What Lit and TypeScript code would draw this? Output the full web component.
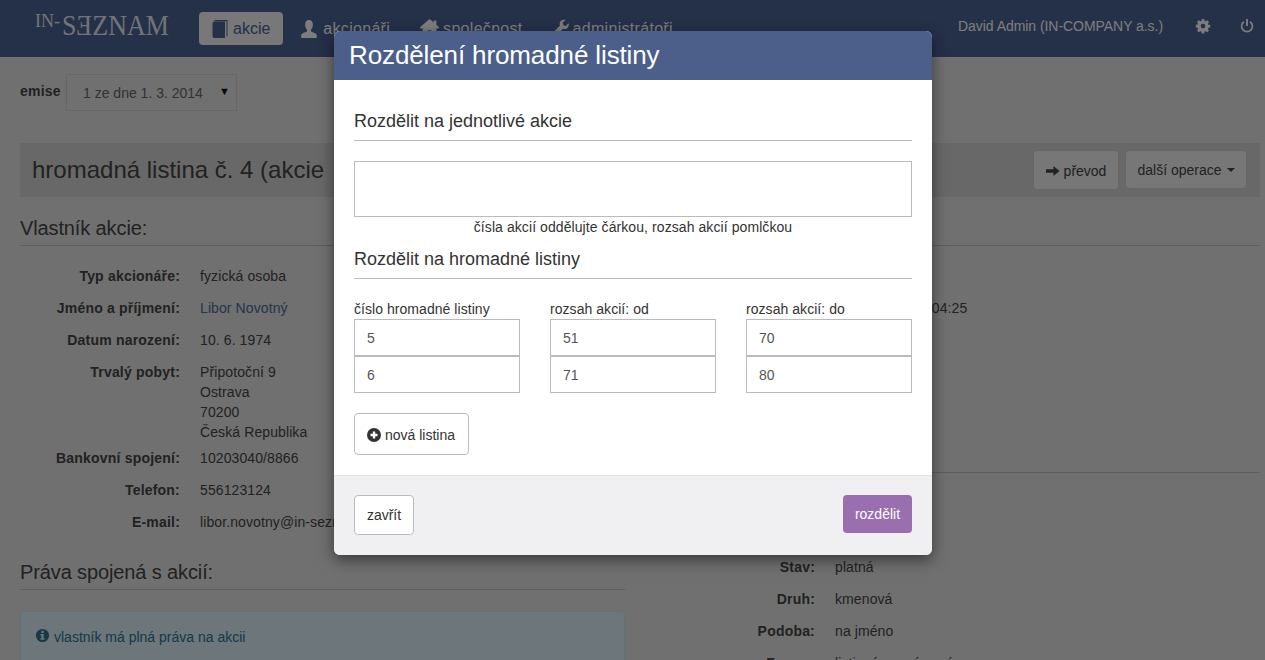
import { LitElement, html, css, svg } from "lit";
import { customElement } from "lit/decorators.js";

const icons = {
  book: svg`<path d="M.5 3C.5 1.900 1.500 1.300 2.500 1.300H13V16H2.500C1.200 16 .5 15.100 .5 14z"/><path d="M2.500 0H15.500V14.500H14.500V1H2.500z"/>`,
  user: svg`<path d="M8 0c2.500 0 3.900 1.800 3.900 4.200 0 1.800-.8 3.500-1.900 4.500v1.500c1.800.7 5.800 1.600 5.800 3.200V16H.2v-2.600c0-1.600 4-2.500 5.800-3.200V8.700C4.900 7.700 4.100 6 4.100 4.200 4.100 1.800 5.500 0 8 0z"/>`,
  home: svg`<path d="M8 0 11.600 3.300V1.500h2.200v3.900L16.300 8l-.9.900H13.800V15.500H9.600v-5H6.400v5H2.200V8.900H.6L-.3 8z"/>`,
  wrench: svg`<path d="M15.600 3.200 12.800 6l-2.500-.7-.7-2.500L12.400 0C10.400-.5 8.300.1 7.300 1.700c-.7 1.200-.8 2.700-.3 3.900L.7 12c-.9.9-.9 2.200 0 3 .8.9 2.100.9 3 0l6.300-6.200c1.300.5 2.700.4 3.900-.3 1.600-1 2.200-3.200 1.700-5.300z"/>`,
  gear: svg`<path fill-rule="evenodd" d="M6.600 0h2.800l.4 2.200 1.200.5L12.900 1.400l2 2-1.300 1.900.5 1.200 2.200.4v2.800l-2.200.4-.5 1.200 1.300 1.900-2 2-1.900-1.300-1.200.5-.4 2.200H6.600l-.4-2.200-1.200-.5-1.900 1.300-2-2 1.300-1.900-.5-1.200L-.3 9.500V6.700l2.200-.4.5-1.200L1.100 3.400l2-2L5 2.700l1.200-.5zM8 5.400A2.700 2.700 0 1 0 8 10.800 2.700 2.700 0 0 0 8 5.400z"/>`,
  power: svg`<path d="M4.500 3.200a6.200 6.200 0 1 0 7 0" fill="none" stroke="currentColor" stroke-width="2"/><rect x="6.900" y="0" width="2.200" height="8"/>`,
  arrow: svg`<path d="M0 6h8.500V2.200L15.500 8l-7 5.800V10H0z"/>`,
  plus: svg`<path fill-rule="evenodd" d="M8 1a7 7 0 1 1 0 14A7 7 0 0 1 8 1zM6.800 4.500v2.300H4.500v2.400h2.300v2.300h2.400V9.200h2.300V6.800H9.200V4.500z"/>`,
  info: svg`<path fill-rule="evenodd" d="M8 1a7 7 0 1 1 0 14A7 7 0 0 1 8 1zM6.800 3v2.300h2.400V3zM5.800 6.500v1.400h1v3.100h-1V12.500h4.400V11h-1V6.500z"/>`,
};

const icon = (name: keyof typeof icons, cls = "") =>
  html`<svg class="ico ${cls}" viewBox="0 0 16 16" preserveAspectRatio="none" aria-hidden="true">${icons[name]}</svg>`;

@customElement("app-root")
export class AppRoot extends LitElement {
  static styles = css`
    :host {
      display: block;
      position: relative;
      height: 660px;
      overflow: hidden;
      background: #e0e0e0;
      font-family: "Liberation Sans", Arial, sans-serif;
      font-size: 14px;
      line-height: 20px;
      color: #444;
    }
    .ico { width: 1em; height: 1em; fill: currentColor; flex: none; display: block; overflow: visible; }

    .navbar {
      height: 57px;
      background: #4a6092;
      border-bottom: 1px solid #e4e4e4;
      display: flex;
      align-items: center;
      color: #fafafa;
    }
    .logo {
      margin-left: 35px;
      width: 164px;
      flex: none;
      display: flex;
      align-items: flex-start;
      font-family: "Liberation Serif", serif;
      color: #fff;
      opacity: 0.85;
      height: 34px;
    }
    .logo .in { font-size: 18px; line-height: 15px; margin-top: 2px; margin-right: 2px; }
    .logo .name {
      font-size: 26px;
      line-height: 30px;
      display: inline-block;
      transform: scaleY(1.17);
      transform-origin: 0 50%;
      margin-top: -1px;
      white-space: nowrap;
    }
    .logo .mir { display: inline-block; transform: scaleX(-1); }
    .nav { display: flex; align-items: center; font-size: 16px; }
    .nav a {
      display: flex;
      align-items: center;
      height: 33px;
      padding: 0 12px;
      border-radius: 4px;
      gap: 4px;
      margin-right: 6px;
      letter-spacing: 0.3px;
    }
    .nav a .ico { width: 16px; height: 18px; }
    .nav a.active { background: #f0f0f0; color: #4a6092; padding: 0 13px; gap: 5px; letter-spacing: 0; }
    .nav a.person { gap: 6px; }
    .nav a.home .ico { width: 19px; height: 17px; margin-top: -2px; }
    .nav a.tool .ico { height: 16px; margin-top: -2px; }
    .user {
      margin-left: auto;
      display: flex;
      align-items: center;
      font-size: 14px;
      letter-spacing: -0.05px;
      padding: 0 11px 6px 0;
    }
    .user .ico { width: 14px; height: 14px; }
    .user .gear { margin-left: 33px; }
    .user .power { margin-left: 30px; }

    .content { padding: 16px 5px 0 20px; }
    .emise { display: flex; align-items: center; height: 37px; }
    .emise b { width: 46px; margin-top: -3px; letter-spacing: 0.2px; }
    .select {
      width: 171px;
      height: 37px;
      box-sizing: border-box;
      border: 1px solid #ccc;
      padding: 0 6px 0 16px;
      display: flex;
      align-items: center;
      justify-content: space-between;
      color: #666;
    }
    .select span { margin-top: 1px; }
    .select i { font-style: normal; color: #111; font-size: 11px; margin-top: -4px; }
    .title {
      margin-top: 32px;
      height: 54px;
      background: #d0d0d0;
      display: flex;
      align-items: center;
      padding-left: 12px;
    }
    .title h1 { margin: 0; font-size: 24px; font-weight: 400; color: #444; white-space: nowrap; }
    .btns { margin-left: auto; display: flex; align-items: flex-start; gap: 6px; padding: 7px 13px 0 0; align-self: stretch; }
    .btn-bg {
      border: 1px solid #ccc;
      border-radius: 4px;
      background: #efefef;
      display: flex;
      align-items: center;
      gap: 4px;
      color: #444;
      box-sizing: border-box;
      justify-content: center;
    }
    .btn-bg.a { width: 86px; height: 40px; padding-top: 1px; }
    .btn-bg.b { width: 122px; height: 39px; }
    .btn-bg .car {
      width: 0; height: 0;
      border: 4px solid transparent;
      border-top-color: #444;
      border-bottom: 0;
      margin-left: 1px;
    }
    .cols { display: grid; grid-template-columns: 605px 605px; column-gap: 30px; margin-top: 16px; }
    .head {
      margin: 0;
      font-size: 20px;
      font-weight: 400;
      line-height: 30px;
      letter-spacing: -0.12px;
      padding-bottom: 2px;
      border-bottom: 1px solid #bbb;
      color: #444;
    }
    .dl { margin: 20px 0 0; }
    .row { display: grid; grid-template-columns: 160px 1fr; column-gap: 20px; margin-bottom: 12px; }
    .row.tight { margin-bottom: 6px; }
    .row dt { text-align: right; font-weight: 700; letter-spacing: 0.2px; }
    .row dd { margin: 0; white-space: nowrap; letter-spacing: 0.1px; }
    .row a { color: #4a6c9a; }
    .gap { margin-top: 25px; }
    .alert {
      margin-top: 21px;
      height: 60px;
      box-sizing: border-box;
      background: #d9edf7;
      border: 1px solid #bce8f1;
      border-radius: 4px;
      padding: 15px 15px;
      color: #31708f;
      display: flex;
      gap: 4px;
    }
    .alert .ico { width: 15px; height: 15px; margin: 1px 0 0 -1px; }
    .spacer-time { margin-left: 1.900px; }
    .right-head { margin-top: 122px; }
    .dl.r { margin-top: 84px; }

    .overlay { position: absolute; inset: 0; background: rgba(0, 0, 0, 0.5); }
    .modal {
      position: absolute;
      left: 334px;
      top: 31px;
      width: 598px;
      height: 524px;
      background: #fff;
      border-radius: 6px;
      box-shadow: 0 5px 15px rgba(0, 0, 0, 0.5);
      display: flex;
      flex-direction: column;
      overflow: hidden;
      color: #333;
    }
    .m-head {
      height: 49px;
      flex: none;
      background: #4b5f8a;
      color: #fff;
      padding-left: 15px;
      display: flex;
      align-items: center;
    }
    .m-head h2 { margin: 0; font-size: 26px; font-weight: 400; line-height: 49px; letter-spacing: -0.12px; }
    .m-body { flex: 1; padding: 31px 20px 0; }
    .m-body h3 {
      margin: 0;
      font-size: 18px;
      font-weight: 400;
      line-height: 20px;
      padding-bottom: 9px;
      border-bottom: 1px solid #bbb;
      color: #333;
    }
    .ta { display: block; margin-top: 20px; height: 56px; box-sizing: border-box; border: 1px solid #bbb; }
    .hint { text-align: center; line-height: 20px; letter-spacing: 0.08px; }
    .m-body h3.h2 { margin-top: 12px; }
    .grid { margin-top: 20px; display: grid; grid-template-columns: repeat(3, 166px); column-gap: 30px; }
    .grid label { display: block; line-height: 20px; white-space: nowrap; letter-spacing: 0.05px; }
    .inp {
      height: 37px;
      box-sizing: border-box;
      border: 1px solid #bbb;
      padding-left: 12px;
      display: flex;
      align-items: center;
      color: #555;
    }
    .btn {
      border: 1px solid #bbb;
      border-radius: 4px;
      background: #fff;
      color: #333;
      display: flex;
      align-items: center;
      justify-content: center;
      box-sizing: border-box;
    }
    .add { margin-top: 20px; width: 115px; height: 42px; gap: 3px; padding-top: 2px; padding-right: 2px; }
    .add .ico { width: 16px; height: 16px; }
    .m-foot {
      height: 80px;
      flex: none;
      box-sizing: border-box;
      background: #f0f0f2;
      border-top: 1px solid #e2e2e2;
      padding: 19px 20px 0;
      display: flex;
      justify-content: space-between;
      align-items: flex-start;
    }
    .close { width: 60px; height: 40px; }
    .go {
      width: 69px;
      height: 38px;
      border-radius: 4px;
      background: #9a6fb0;
      color: #fff;
      display: flex;
      align-items: center;
      justify-content: center;
    }
  `;

  render() {
    return html`
      <header class="navbar">
        <div class="logo">
          <span class="in">IN-</span>
          <span class="name">S<span class="mir">E</span>ZNAM</span>
        </div>
        <nav class="nav">
          <a class="active">${icon("book")}akcie</a>
          <a class="person">${icon("user")}akcionáři</a>
          <a class="home">${icon("home")}společnost</a>
          <a class="tool">${icon("wrench")}administrátoři</a>
        </nav>
        <div class="user">
          <span>David Admin (IN-COMPANY a.s.)</span>
          ${icon("gear", "gear")}${icon("power", "power")}
        </div>
      </header>
      <main class="content">
        <div class="emise">
          <b>emise</b>
          <div class="select"><span>1 ze dne 1. 3. 2014</span><i>▼</i></div>
        </div>
        <div class="title">
          <h1>hromadná listina č. 4 (akcie&nbsp;&nbsp;51–80)</h1>
          <div class="btns">
            <div class="btn-bg a">${icon("arrow")}převod</div>
            <div class="btn-bg b">další operace<span class="car"></span></div>
          </div>
        </div>
        <div class="cols">
          <section>
            <h2 class="head">Vlastník akcie:</h2>
            <dl class="dl">
              <div class="row"><dt>Typ akcionáře:</dt><dd>fyzická osoba</dd></div>
              <div class="row"><dt>Jméno a příjmení:</dt><dd><a>Libor Novotný</a></dd></div>
              <div class="row"><dt>Datum narození:</dt><dd>10. 6. 1974</dd></div>
              <div class="row tight"><dt>Trvalý pobyt:</dt><dd>Připotoční 9<br />Ostrava<br />70200<br />Česká Republika</dd></div>
              <div class="row"><dt>Bankovní spojení:</dt><dd>10203040/8866</dd></div>
              <div class="row"><dt>Telefon:</dt><dd>556123124</dd></div>
              <div class="row"><dt>E-mail:</dt><dd>libor.novotny@in-seznam.cz</dd></div>
            </dl>
            <h2 class="head gap">Práva spojená s akcií:</h2>
            <div class="alert">${icon("info")}<span>vlastník má plná práva na akcii</span></div>
          </section>
          <section>
            <h2 class="head">Historie akcie:</h2>
            <dl class="dl">
              <div class="row"><dt></dt><dd>&nbsp;</dd></div>
              <div class="row"><dt>Vytvořeno:</dt><dd>12. 3. 2014 15:<span class="spacer-time">04:25</span></dd></div>
            </dl>
            <h2 class="head right-head">Akcie:</h2>
            <dl class="dl r">
              <div class="row"><dt>Stav:</dt><dd>platná</dd></div>
              <div class="row"><dt>Druh:</dt><dd>kmenová</dd></div>
              <div class="row"><dt>Podoba:</dt><dd>na jméno</dd></div>
              <div class="row"><dt>Forma:</dt><dd>listinný cenný papír</dd></div>
            </dl>
          </section>
        </div>
      </main>
      <div class="overlay"></div>
      <div class="modal">
        <div class="m-head"><h2>Rozdělení hromadné listiny</h2></div>
        <div class="m-body">
          <h3>Rozdělit na jednotlivé akcie</h3>
          <div class="ta"></div>
          <div class="hint">čísla akcií oddělujte čárkou, rozsah akcií pomlčkou</div>
          <h3 class="h2">Rozdělit na hromadné listiny</h3>
          <div class="grid">
            <div><label>číslo hromadné listiny</label><div class="inp">5</div><div class="inp">6</div></div>
            <div><label>rozsah akcií: od</label><div class="inp">51</div><div class="inp">71</div></div>
            <div><label>rozsah akcií: do</label><div class="inp">70</div><div class="inp">80</div></div>
          </div>
          <div class="btn add">${icon("plus")}nová listina</div>
        </div>
        <div class="m-foot">
          <div class="btn close">zavřít</div>
          <div class="go">rozdělit</div>
        </div>
      </div>
    `;
  }
}
